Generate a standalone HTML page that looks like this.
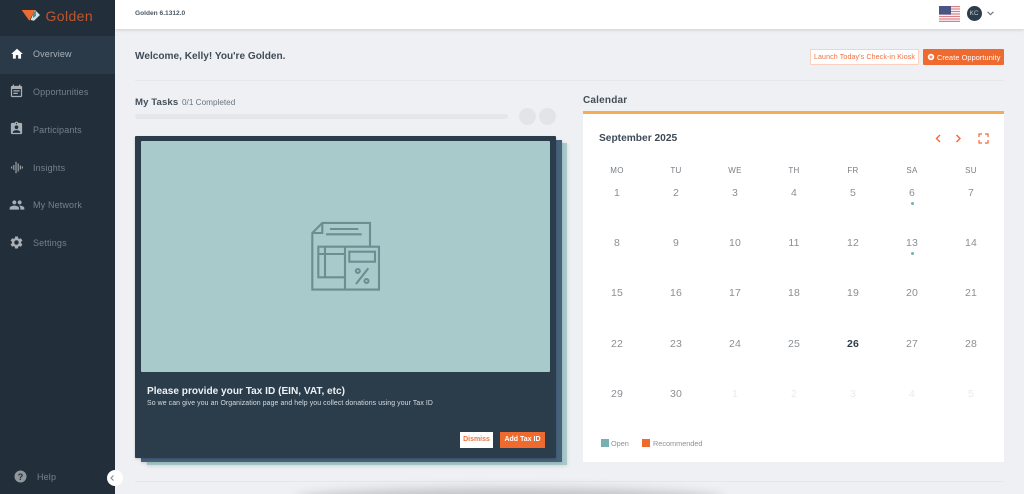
<!DOCTYPE html>
<html lang="en"><head><meta charset="utf-8"><title>Golden</title>
<style>
*{box-sizing:border-box}
html,body{margin:0;padding:0;width:1024px;height:494px;overflow:hidden;background:#eef0f4;font-family:"Liberation Sans",sans-serif}
#r{position:relative;width:1024px;height:494px;overflow:hidden;background:#eef0f4}
.a{position:absolute;white-space:nowrap;line-height:1}
.nav{left:33px;font-size:9px;color:#76808a;letter-spacing:.15px}
.ic{position:absolute;left:9px;width:15px;height:15px;fill:#a9afb5}
.d{position:absolute;width:40px;text-align:center;font-size:10.5px;line-height:12px;color:#8b8f93;letter-spacing:.2px}
.h{position:absolute;width:40px;text-align:center;font-size:8px;line-height:10px;color:#777e85;letter-spacing:.3px;top:166px}
.f{color:#e9eaeb}
.dot{position:absolute;width:3px;height:3px;border-radius:50%;background:#76b0b0}
</style></head><body><div id="r">
<div class="a" style="left:0;top:0;width:115px;height:494px;background:#222f3b"></div>
<div class="a" style="left:0;top:36px;width:115px;height:38px;background:#2a3a49"></div>
<svg class="a" style="left:20px;top:8px" width="22" height="15" viewBox="20 8 22 15"><polygon points="21.7,10 35,10 29.3,20.7" fill="#ee6b2f"/><polygon points="35,10 40,15 34,20.7 30.5,20" fill="#cfe3e2"/><polygon points="33,12 36,11 36,16 33,18" fill="#4f8f93"/></svg>
<div class="a" style="left:45.5px;top:9px;font-size:14px;color:#c2552c;letter-spacing:.4px">Golden</div>

<svg class="ic" style="top:47px;left:9.5px;width:14px;height:14px;fill:#fff" viewBox="0 0 24 24"><path d="M10 20v-6h4v6h5v-8h3L12 3 2 12h3v8z"/></svg>
<div class="a nav" style="top:50px;color:#aab1b8">Overview</div>
<svg class="ic" style="top:84px" viewBox="0 0 24 24"><path d="M17 10H7v2h10v-2zm2-7h-1V1h-2v2H8V1H6v2H5c-1.11 0-1.99.9-1.99 2L3 19c0 1.1.89 2 2 2h14c1.1 0 2-.9 2-2V5c0-1.1-.9-2-2-2zm0 16H5V8h14v11zm-5-5H7v2h7v-2z"/></svg>
<div class="a nav" style="top:88px">Opportunities</div>
<svg class="ic" style="top:121px" viewBox="0 0 24 24"><path d="M19 3h-4.18C14.4 1.84 13.3 1 12 1c-1.3 0-2.4.84-2.82 2H5c-1.1 0-2 .9-2 2v14c0 1.1.9 2 2 2h14c1.1 0 2-.9 2-2V5c0-1.1-.9-2-2-2zm-7 0c.55 0 1 .45 1 1s-.45 1-1 1-1-.45-1-1 .45-1 1-1zm0 4c1.66 0 3 1.34 3 3s-1.34 3-3 3-3-1.34-3-3 1.34-3 3-3zm6 12H6v-1.4c0-2 4-3.1 6-3.1s6 1.1 6 3.1V19z"/></svg>
<div class="a nav" style="top:126px">Participants</div>
<svg class="a" style="left:11px;top:160px" width="12" height="15" viewBox="0 0 12 15"><path d="M.6 6.5v2M2.8 5v5M5 1.8v11.4M7.2 3.5v8M9.4 5.5v4M11.4 6.5v2" stroke="#99a0a6" stroke-width="1.2" fill="none"/></svg>
<div class="a nav" style="top:163.5px">Insights</div>
<svg class="ic" style="top:197px;left:8.5px;width:16px;height:16px" viewBox="0 0 24 24"><path d="M16 11c1.66 0 2.99-1.34 2.99-3S17.66 5 16 5c-1.66 0-3 1.34-3 3s1.34 3 3 3zm-8 0c1.66 0 2.99-1.34 2.99-3S9.66 5 8 5C6.34 5 5 6.34 5 8s1.34 3 3 3zm0 2c-2.33 0-7 1.17-7 3.5V19h14v-2.5c0-2.33-4.67-3.5-7-3.5zm8 0c-.29 0-.62.02-.97.05 1.16.84 1.97 1.97 1.97 3.45V19h6v-2.5c0-2.33-4.67-3.5-7-3.5z"/></svg>
<div class="a nav" style="top:201px">My Network</div>
<svg class="ic" style="top:235px" viewBox="0 0 24 24"><path d="M19.14 12.94c.04-.3.06-.61.06-.94 0-.32-.02-.64-.07-.94l2.03-1.58c.18-.14.23-.41.12-.61l-1.92-3.32c-.12-.22-.37-.29-.59-.22l-2.39.96c-.5-.38-1.03-.7-1.62-.94l-.36-2.54c-.04-.24-.24-.41-.48-.41h-3.84c-.24 0-.43.17-.47.41l-.36 2.54c-.59.24-1.13.57-1.62.94l-2.39-.96c-.22-.08-.47 0-.59.22L2.74 8.87c-.12.21-.08.47.12.61l2.03 1.58c-.05.3-.09.63-.09.94s.02.64.07.94l-2.03 1.58c-.18.14-.23.41-.12.61l1.92 3.32c.12.22.37.29.59.22l2.39-.96c.5.38 1.03.7 1.62.94l.36 2.54c.05.24.24.41.48.41h3.84c.24 0 .44-.17.47-.41l.36-2.54c.59-.24 1.13-.56 1.62-.94l2.39.96c.22.08.47 0 .59-.22l1.92-3.32c.12-.22.07-.47-.12-.61l-2.01-1.58zM12 15.6c-1.98 0-3.6-1.62-3.6-3.6s1.62-3.6 3.6-3.6 3.6 1.62 3.6 3.6-1.62 3.6-3.6 3.6z"/></svg>
<div class="a nav" style="top:239px">Settings</div>
<svg class="a" style="left:14px;top:470px" width="13" height="13" viewBox="0 0 13 13"><circle cx="6.5" cy="6.5" r="6" fill="#8f969c"/><text x="6.5" y="9.8" font-size="9" font-weight="700" text-anchor="middle" fill="#222f3b" font-family="Liberation Sans">?</text></svg>
<div class="a nav" style="left:37px;top:473px">Help</div>
<div class="a" style="left:107px;top:470px;width:16px;height:16px;border-radius:50%;background:#fff"></div>
<svg class="a" style="left:110px;top:475px" width="5" height="6" viewBox="0 0 5 6"><path d="M3.5.5 1 3l2.5 2.5" fill="none" stroke="#8b9299" stroke-width="1.2"/></svg>

<div class="a" style="left:115px;top:0;width:909px;height:29px;background:#fff;box-shadow:0 1px 3px rgba(0,0,0,.14)"></div>
<div class="a" style="left:135px;top:10.5px;font-size:6.6px;font-weight:700;color:#4c5761">Golden 6.1312.0</div>
<svg class="a" style="left:939px;top:6px" width="21" height="16" viewBox="0 0 21 16"><rect width="21" height="16" fill="#fff"/><path d="M0 .6h21M0 3h21M0 5.5h21M0 8h21M0 10.5h21M0 13h21M0 15.4h21" stroke="#d98088" stroke-width="1.2"/><rect width="12" height="8.6" fill="#4a5585"/></svg>
<div class="a" style="left:966.5px;top:6px;width:15px;height:15px;border-radius:50%;background:#2b3c4b;color:#c5cbd0;font-size:6.5px;line-height:15px;text-align:center">KC</div>
<svg class="a" style="left:987px;top:11px" width="7" height="5" viewBox="0 0 7 5"><path d="M.6.8 3.5 3.7 6.4.8" fill="none" stroke="#6d757c" stroke-width="1.1"/></svg>

<div class="a" style="left:135px;top:52px;font-size:10.1px;font-weight:700;color:#414c57">Welcome, Kelly! You're Golden.</div>
<div class="a" style="left:810px;top:49px;width:109px;height:16px;background:#fff;border:1px solid #fbd0bd;border-radius:1px;color:#ef7140;font-size:7.1px;line-height:15px;text-align:center;letter-spacing:.1px">Launch Today's Check-in Kiosk</div>
<div class="a" style="left:923px;top:49px;width:81px;height:16px;background:#ef6a2f;border-radius:1px;color:#fff;font-size:7.3px;line-height:17px;padding-left:14px;letter-spacing:.1px">Create Opportunity</div>
<svg class="a" style="left:927px;top:53px" width="8" height="8" viewBox="0 0 8 8"><circle cx="4" cy="4" r="3.2" fill="#fff"/><path d="M4 2.4v3.2M2.4 4h3.2" stroke="#ef6a2f" stroke-width=".9"/></svg>
<div class="a" style="left:135px;top:80px;width:869px;height:1px;background:#e5e7eb"></div>

<div class="a" style="left:135px;top:97.5px;font-size:9.6px;font-weight:700;color:#434e59;letter-spacing:.1px">My Tasks</div>
<div class="a" style="left:182px;top:98.5px;font-size:8.2px;color:#6b747d">0/1 Completed</div>
<div class="a" style="left:135px;top:114px;width:373px;height:5px;background:#e4e6ea;border-radius:3px"></div>
<div class="a" style="left:519px;top:108px;width:17px;height:17px;border-radius:50%;background:#e2e4e8"></div>
<div class="a" style="left:539px;top:108px;width:17px;height:17px;border-radius:50%;background:#e2e4e8"></div>

<div class="a" style="left:147px;top:143px;width:420px;height:322px;background:#a8cacb;box-shadow:0 1px 4px rgba(0,0,0,.12)"></div>
<div class="a" style="left:141px;top:140px;width:421px;height:322px;background:#45627a;box-shadow:0 1px 3px rgba(0,0,0,.15)"></div>
<div class="a" style="left:135px;top:136px;width:421px;height:322px;background:#2b3c4b;border-radius:1px;box-shadow:0 1px 2px rgba(0,0,0,.2)"></div>
<div class="a" style="left:141px;top:141px;width:409px;height:231px;background:#a8cacb;border-radius:1px"></div>
<svg class="a" style="left:300px;top:210px" width="90" height="90" viewBox="300 210 90 90" fill="none" stroke="#6d8e91" stroke-width="2.1"><path d="M370 246.7V222.9H322.3L312.3 233V289.6H379V246.7H318.3V277.3H345M322.3 222.9V233H312.3M345 246.7V289.6M325 246.7V277.3M318.3 254H345M330 229H358.3M326 234.3H361.7"/><rect x="349.3" y="251.7" width="25.7" height="10"/><path d="M356 284 368.3 268.3"/><circle cx="357.8" cy="271" r="2"/><circle cx="366.5" cy="281" r="2"/></svg>
<div class="a" style="left:147px;top:386.5px;font-size:10.1px;font-weight:700;color:#eef1f3">Please provide your Tax ID (EIN, VAT, etc)</div>
<div class="a" style="left:147px;top:400.5px;font-size:6.9px;color:#d7dcdf;letter-spacing:.1px">So we can give you an Organization page and help you collect donations using your Tax ID</div>
<div class="a" style="left:460px;top:432px;width:33px;height:16px;background:#fff;color:#ef7140;font-size:7px;font-weight:700;line-height:16px;text-align:center">Dismiss</div>
<div class="a" style="left:500px;top:432px;width:45px;height:16px;background:#ef6a2f;color:#fff;font-size:7px;font-weight:700;line-height:16px;text-align:center">Add Tax ID</div>
<div class="a" style="left:135px;top:481px;width:869px;height:1px;background:#e5e7eb"></div>
<div class="a" style="left:296px;top:488px;width:428px;height:22px;background:#c2c4c7;border-radius:50%;filter:blur(5px)"></div>

<div class="a" style="left:583px;top:96px;font-size:10px;font-weight:700;color:#434e59;letter-spacing:.2px">Calendar</div>
<div class="a" style="left:583px;top:114px;width:421px;height:348px;background:#fff"></div>
<div class="a" style="left:583px;top:111px;width:421px;height:3px;background:#f5ac55"></div>
<div class="a" style="left:599px;top:133.5px;font-size:10.2px;font-weight:700;color:#3e4a56">September 2025</div>
<svg class="a" style="left:930px;top:130px" width="62" height="16" viewBox="930 130 62 16" fill="none" stroke="#f0693a" stroke-width="1.4"><path d="M940 135 936.5 138.5 940 142M956.5 135 960 138.5 956.5 142"/><path d="M979 137v-3h3M985 134h3v3M988 140v3h-3M982 143h-3v-3" stroke-width="1.2"/></svg>

<div class="h" style="left:597px">MO</div><div class="h" style="left:656px">TU</div><div class="h" style="left:715px">WE</div><div class="h" style="left:774px">TH</div><div class="h" style="left:833px">FR</div><div class="h" style="left:892px">SA</div><div class="h" style="left:951px">SU</div>

<div class="d" style="left:597px;top:187px">1</div><div class="d" style="left:656px;top:187px">2</div><div class="d" style="left:715px;top:187px">3</div><div class="d" style="left:774px;top:187px">4</div><div class="d" style="left:833px;top:187px">5</div><div class="d" style="left:892px;top:187px">6</div><div class="d" style="left:951px;top:187px">7</div>
<div class="d" style="left:597px;top:237px">8</div><div class="d" style="left:656px;top:237px">9</div><div class="d" style="left:715px;top:237px">10</div><div class="d" style="left:774px;top:237px">11</div><div class="d" style="left:833px;top:237px">12</div><div class="d" style="left:892px;top:237px">13</div><div class="d" style="left:951px;top:237px">14</div>
<div class="d" style="left:597px;top:287px">15</div><div class="d" style="left:656px;top:287px">16</div><div class="d" style="left:715px;top:287px">17</div><div class="d" style="left:774px;top:287px">18</div><div class="d" style="left:833px;top:287px">19</div><div class="d" style="left:892px;top:287px">20</div><div class="d" style="left:951px;top:287px">21</div>
<div class="d" style="left:597px;top:338px">22</div><div class="d" style="left:656px;top:338px">23</div><div class="d" style="left:715px;top:338px">24</div><div class="d" style="left:774px;top:338px">25</div><div class="d" style="left:833px;top:338px;color:#2f3e4c;font-weight:700">26</div><div class="d" style="left:892px;top:338px">27</div><div class="d" style="left:951px;top:338px">28</div>
<div class="d" style="left:597px;top:388px">29</div><div class="d" style="left:656px;top:388px">30</div><div class="d f" style="left:715px;top:388px">1</div><div class="d f" style="left:774px;top:388px">2</div><div class="d f" style="left:833px;top:388px">3</div><div class="d f" style="left:892px;top:388px">4</div><div class="d f" style="left:951px;top:388px">5</div>
<div class="dot" style="left:910.5px;top:201.5px"></div><div class="dot" style="left:910.5px;top:251.5px"></div>

<div class="a" style="left:601px;top:439px;width:8px;height:8px;background:#76b0b0"></div>
<div class="a" style="left:611px;top:440px;font-size:7.3px;color:#8b9197">Open</div>
<div class="a" style="left:642px;top:439px;width:8px;height:8px;background:#ef6a2f"></div>
<div class="a" style="left:653px;top:440px;font-size:7.3px;color:#8b9197">Recommended</div>
</div></body></html>
